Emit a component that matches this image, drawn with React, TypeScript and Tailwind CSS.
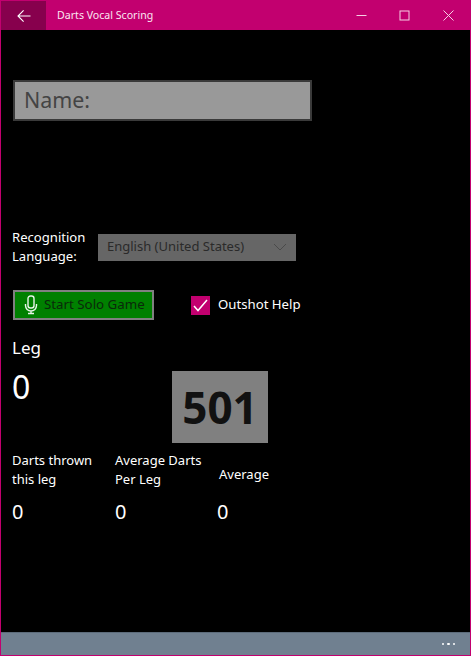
import React from "react";

export default function App() {
  return (
    <div className="w-[471px] h-[656px] flex flex-col bg-black border border-[#c2006f] overflow-hidden text-white font-['Noto_Sans',sans-serif]">
      <header className="h-[29px] shrink-0 flex items-center bg-[#c2006f]">
        <div className="w-[45px] h-full flex items-center justify-center bg-[#87004d]">
          <svg width="14" height="14" viewBox="0 0 14 14" fill="none" stroke="#fff" strokeWidth="1.1">
            <path d="M1 7h12.5M6.6 1.4 1 7l5.6 5.6" />
          </svg>
        </div>
        <div className="ml-[11px] text-[10.6px] leading-none text-[#fbe6f1]">Darts Vocal Scoring</div>
        <div className="ml-auto flex items-center h-full">
          <div className="w-[43.5px] flex justify-center">
            <svg width="11" height="11" viewBox="0 0 11 11" stroke="#f5cfe4" strokeWidth="1" fill="none"><path d="M0.5 5.5h10" /></svg>
          </div>
          <div className="w-[43.5px] flex justify-center">
            <svg width="11" height="11" viewBox="0 0 11 11" stroke="#f5cfe4" strokeWidth="1" fill="none"><rect x="1" y="1" width="9" height="9" /></svg>
          </div>
          <div className="w-[43.5px] flex justify-center">
            <svg width="11" height="11" viewBox="0 0 11 11" stroke="#f5cfe4" strokeWidth="1" fill="none"><path d="M0.5 0.5l10 10M10.5 0.5l-10 10" /></svg>
          </div>
        </div>
      </header>

      <main className="flex-1 flex flex-col pl-[12px]">
        <div className="mt-[50px] w-[299px] h-[41px] flex items-center pl-[9px] bg-[#999999] border-2 border-[#3a3a3a] text-[21.4px] text-[#444444]">
          Name:
        </div>

        <div className="mt-[106px] flex items-center h-[40px]">
          <div className="w-[86px] -ml-[1px] text-[13.1px] leading-[19px] text-white">Recognition<br />Language:</div>
          <div className="w-[198px] h-[27px] flex items-center justify-between pl-[9px] pr-[9px] bg-[#666666] text-[13px] text-[#2a2a2a]">
            <span>English (United States)</span>
            <svg width="14" height="8" viewBox="0 0 14 8" fill="none" stroke="#4a4a4a" strokeWidth="1"><path d="M1 1l6 6 6-6" /></svg>
          </div>
        </div>

        <div className="mt-[23px] flex items-center">
          <div className="w-[141px] h-[30px] flex items-center pl-[9px] bg-[#008000] border-2 border-[#808080] text-[13.3px] text-[#0a2a0a]">
            <svg width="14" height="20" viewBox="0 0 14 20" fill="none" stroke="#e8f5e8" strokeWidth="1.4" className="shrink-0">
              <rect x="4" y="1" width="6" height="12" rx="2.5" />
              <path d="M1.5 9v1.5a5.5 5.5 0 0 0 11 0V9M7 16v2M4 18.5h6" />
            </svg>
            <span className="ml-[6px] whitespace-nowrap">Start Solo Game</span>
          </div>
          <div className="ml-[37px] w-[19px] h-[19px] flex items-center justify-center bg-[#c2006f]">
            <svg width="15" height="13" viewBox="0 0 15 13" fill="none" stroke="#fff" strokeWidth="1.5"><path d="M1 7l4 4.5L14 1" /></svg>
          </div>
          <div className="ml-[8px] text-[13.2px] text-white whitespace-nowrap">Outshot Help</div>
        </div>

        <div className="mt-[16px] flex">
          <div className="w-[160px] -ml-[1px]">
            <div className="text-[17px] leading-[24px]">Leg</div>
            <div className="mt-[5px] text-[32px] leading-[44px]">0</div>
          </div>
          <div className="mt-[35px] w-[96px] h-[72px] flex items-center justify-center bg-[#808080] text-[#111111] text-[44px] font-bold leading-none">501</div>
        </div>

        <div className="mt-[8px] -ml-[1px] flex items-center text-[13px] leading-[19px]">
          <div className="w-[103px]">Darts thrown<br />this leg</div>
          <div className="w-[104px]">Average Darts<br />Per Leg</div>
          <div className="mt-[8px]">Average</div>
        </div>

        <div className="mt-[11px] -ml-[1px] flex text-[20px] leading-[24px]">
          <div className="w-[103px]">0</div>
          <div className="w-[102px]">0</div>
          <div>0</div>
        </div>
      </main>

      <footer className="h-[23px] shrink-0 flex items-center justify-end pr-[15px] gap-[3px] bg-[#708090] border-t border-[#5c6b7a]">
        <span className="w-[2.5px] h-[2.5px] bg-white rounded-full" />
        <span className="w-[2.5px] h-[2.5px] bg-white rounded-full" />
        <span className="w-[2.5px] h-[2.5px] bg-white rounded-full" />
      </footer>
    </div>
  );
}
